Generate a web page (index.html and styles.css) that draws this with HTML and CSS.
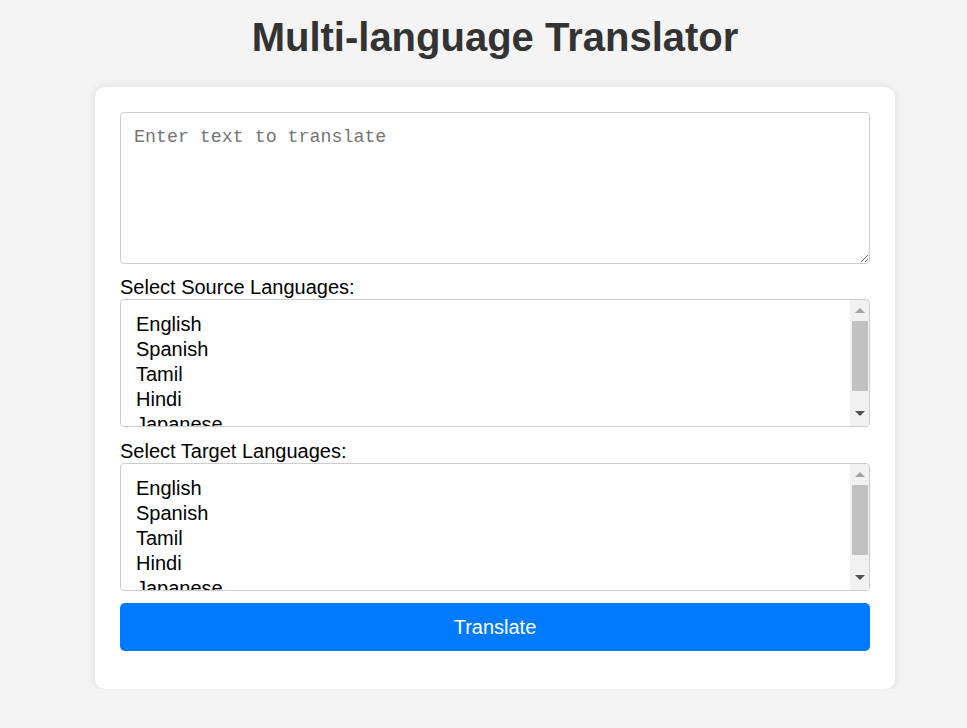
FILE: index.html
```html
<!DOCTYPE html>
<html lang="en">
<head>
<meta charset="utf-8">
<title>Multi-language Translator</title>
<link rel="stylesheet" href="styles.css">
</head>
<body>
<h1 class="title">Multi-language Translator</h1>
<div class="container">
  <textarea class="input-text" placeholder="Enter text to translate"></textarea>
  <label class="field-label" for="source">Select Source Languages:</label>
  <div class="list-wrap">
    <select class="lang-list" id="source" multiple>
      <option>English</option>
      <option>Spanish</option>
      <option>Tamil</option>
      <option>Hindi</option>
      <option>Japanese</option>
      <option>French</option>
    </select>
    <div class="fake-scroll" aria-hidden="true">
      <span class="arrow up"></span>
      <span class="thumb"></span>
      <span class="arrow down"></span>
    </div>
  </div>
  <label class="field-label second" for="target">Select Target Languages:</label>
  <div class="list-wrap">
    <select class="lang-list" id="target" multiple>
      <option>English</option>
      <option>Spanish</option>
      <option>Tamil</option>
      <option>Hindi</option>
      <option>Japanese</option>
      <option>French</option>
    </select>
    <div class="fake-scroll" aria-hidden="true">
      <span class="arrow up"></span>
      <span class="thumb"></span>
      <span class="arrow down"></span>
    </div>
  </div>
  <button class="translate-btn" type="button">Translate</button>
</div>
</body>
</html>
```

FILE: styles.css
```css
html, body {
  margin: 0;
  padding: 0;
}

body {
  padding-left: 23px;
  background: #f4f4f4;
  font-family: "Liberation Sans", Arial, sans-serif;
  color: #000;
}

.title {
  margin: 14px 0 0;
  height: 46px;
  line-height: 46px;
  font-size: 40px;
  font-weight: bold;
  color: #333;
  text-align: center;
}

.container {
  box-sizing: border-box;
  width: 800px;
  margin: 27px auto 0;
  padding: 25px 25px 38px;
  background: #fff;
  border-radius: 10px;
  box-shadow: 0 0 10px rgba(0, 0, 0, 0.1);
  display: flex;
  flex-direction: column;
}

.input-text {
  box-sizing: border-box;
  display: block;
  width: 100%;
  height: 152px;
  margin: 0;
  padding: 14px 13px;
  border: 1px solid #ccc;
  border-radius: 4px;
  font-family: "Liberation Mono", "DejaVu Sans Mono", monospace;
  font-size: 18.3px;
  color: #000;
  resize: vertical;
}

.input-text::placeholder {
  color: #757575;
}

.field-label {
  display: block;
  margin-top: 12px;
  height: 23px;
  line-height: 23px;
  font-size: 20px;
}

.field-label.second {
  margin-top: 13px;
}

.list-wrap {
  position: relative;
}

.lang-list {
  box-sizing: border-box;
  display: block;
  width: 100%;
  height: 128px;
  margin: 0;
  padding: 13px 30px 12px 13px;
  border: 1px solid #ccc;
  border-radius: 4px;
  background: #fff;
  font-family: "Liberation Sans", Arial, sans-serif;
  font-size: 20px;
  color: #000;
  outline: none;
  overflow: hidden;
}

.lang-list option {
  padding: 0 2px 1px;
  line-height: 23.4px;
}

.fake-scroll {
  position: absolute;
  top: 1px;
  right: 1px;
  bottom: 1px;
  width: 19px;
  background: #f1f1f1;
  border-radius: 0 3px 3px 0;
  display: flex;
  flex-direction: column;
  align-items: center;
}

.arrow {
  display: flex;
  align-items: center;
  justify-content: center;
  width: 100%;
  height: 21px;
  flex: none;
}

.arrow::before {
  content: "";
  width: 0;
  height: 0;
  border-left: 5px solid transparent;
  border-right: 5px solid transparent;
}

.arrow.up::before {
  border-bottom: 5px solid #a3a3a3;
}

.arrow.down {
  margin-top: auto;
  height: 26px;
}

.arrow.down::before {
  border-top: 5px solid #505050;
}

.thumb {
  display: block;
  width: 16px;
  height: 70px;
  background: #c1c1c1;
  flex: none;
}

.translate-btn {
  display: block;
  width: 100%;
  height: 48px;
  margin-top: 12px;
  padding: 0;
  border: none;
  border-radius: 5px;
  background: #007bff;
  color: #fff;
  font-family: "Liberation Sans", Arial, sans-serif;
  font-size: 20px;
  cursor: pointer;
}
```
